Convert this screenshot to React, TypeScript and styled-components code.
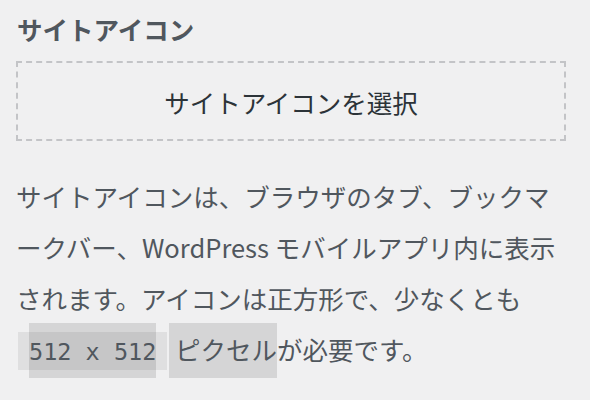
import React from 'react';
import {styled, createGlobalStyle} from 'styled-components';

const GlobalStyle = createGlobalStyle`
  html, body {
    margin: 0;
    padding: 0;
    background: #f0f0f1;
  }
  body {
    font-family: "Noto Sans CJK JP", "Noto Sans", sans-serif;
  }
`;

const Panel = styled.div`
  width: 550px;
  padding: 11px 0 0 16px;
  display: flex;
  flex-direction: column;
`;

const Title = styled.h3`
  margin: 0 0 14px 1px;
  font-size: 25.5px;
  line-height: 36px;
  font-weight: 700;
  color: #50575e;
`;

const SelectButton = styled.button`
  box-sizing: border-box;
  width: 550px;
  height: 80px;
  border: 2px dashed #c3c4c7;
  background: transparent;
  font-family: inherit;
  font-size: 25.5px;
  color: #2c3338;
  cursor: pointer;
  padding: 0;
`;

const Description = styled.p`
  margin: 29px 0 0;
  font-size: 25.5px;
  line-height: 51px;
  color: #50575e;
`;

const Code = styled.code`
  font-family: "DejaVu Sans Mono", "Liberation Mono", monospace;
  font-size: 23.5px;
  background: rgba(0, 0, 0, 0.07);
  padding: 6px 11px 4px;
  margin-left: 2px;
`;

const Mark = styled.span<{$mono?: boolean}>`
  background: rgba(0, 0, 0, 0.11);
  padding: ${(p) => (p.$mono ? '15px 0 14px' : '7px 0 12px')};
  margin-left: ${(p) => (p.$mono ? '0' : '2px')};
`;

export default function App() {
  return (
    <>
      <GlobalStyle />
      <Panel>
        <Title>サイトアイコン</Title>
        <SelectButton type="button">サイトアイコンを選択</SelectButton>
        <Description>
          サイトアイコンは、ブラウザのタブ、ブックマークバー、WordPress
          モバイルアプリ内に表示されます。アイコンは正方形で、少なくとも
          <Code>
            <Mark $mono>512 x 512</Mark>
          </Code>
          <Mark> ピクセル</Mark>が必要です。
        </Description>
      </Panel>
    </>
  );
}
